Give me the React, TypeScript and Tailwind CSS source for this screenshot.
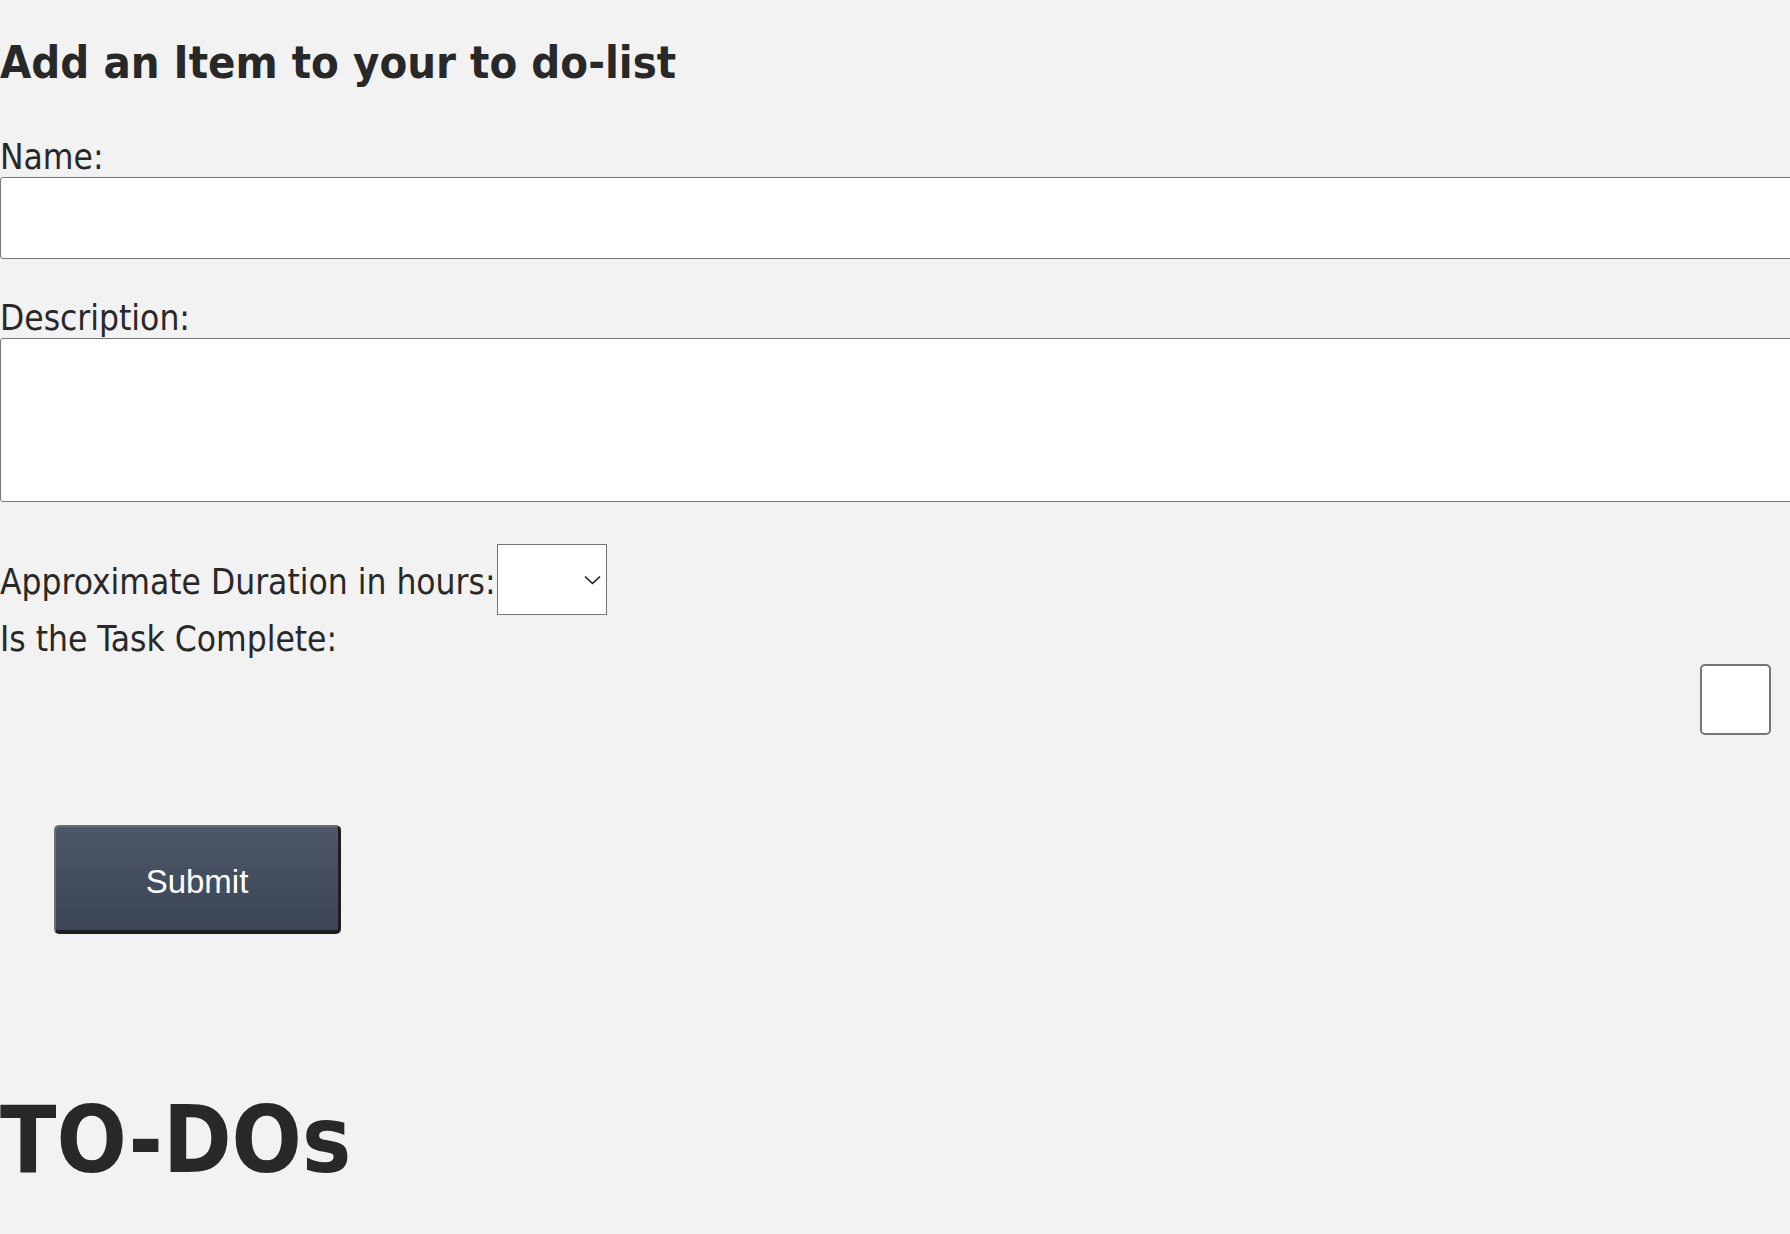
import { useState } from 'react';

// Simple to-do entry form
const bodyFont = { fontFamily: '"DejaVu Sans Condensed", "DejaVu Sans", Tahoma, Verdana, sans-serif' };

export default function App() {
  const [name, setName] = useState('');
  const [desc, setDesc] = useState('');
  const [hours, setHours] = useState('');
  const [done, setDone] = useState(false);

  return (
    <div className="min-h-screen w-full overflow-hidden bg-[#f2f2f2] text-[#282828]" style={bodyFont}>
      <form className="flex flex-col" onSubmit={(e) => e.preventDefault()}>
        <h2 className="mt-[38px] text-[45px] leading-[50px] font-bold font-stretch-condensed whitespace-nowrap">
          Add an Item to your to do-list
        </h2>

        <label className="mt-[49px] text-[35px] leading-[40px] font-stretch-condensed">Name:</label>
        <input
          value={name}
          onChange={(e) => setName(e.target.value)}
          className="h-[82px] w-[1820px] shrink-0 rounded-[3px] border border-[#767676] bg-white px-2 text-[30px] outline-none"
        />

        <label className="mt-[39px] text-[35px] leading-[40px] font-stretch-condensed">Description:</label>
        <textarea
          value={desc}
          onChange={(e) => setDesc(e.target.value)}
          className="h-[164px] w-[1820px] shrink-0 resize-none rounded-[3px] border border-[#767676] bg-white px-2 text-[30px] outline-none"
        />

        <div className="mt-[42px] flex items-end">
          <label className="mb-[13px] text-[35px] leading-[40px] font-stretch-condensed whitespace-nowrap">
            Approximate Duration in hours:
          </label>
          <div className="relative ml-[1px] h-[71px] w-[110px]">
            <select
              value={hours}
              onChange={(e) => setHours(e.target.value)}
              className="h-full w-full appearance-none border border-[#767676] bg-white outline-none"
            >
              <option value=""></option>
              <option value="1">1</option>
              <option value="2">2</option>
              <option value="3">3</option>
              <option value="4">4</option>
            </select>
            <svg
              className="pointer-events-none absolute left-[87px] top-[31px]"
              width="17"
              height="10"
              viewBox="0 0 17 10"
              fill="none"
            >
              <path d="M1 1.5 L8.5 8.5 L16 1.5" stroke="#1a1a1a" strokeWidth="1.6" />
            </svg>
          </div>
        </div>

        <label className="mt-[4px] text-[35px] leading-[40px] font-stretch-condensed">Is the Task Complete:</label>
        <div className="mt-[5px] flex justify-end pr-[19px]">
          <input
            type="checkbox"
            checked={done}
            onChange={(e) => setDone(e.target.checked)}
            className="h-[71px] w-[71px] appearance-none rounded-[5px] border-2 border-[#767676] bg-white"
          />
        </div>

        <div className="mt-[90px] pl-[54px]">
          <button
            type="submit"
            className="h-[109px] w-[287px] rounded-[5px] border-t-2 border-l-2 border-r-[3px] border-b-[4px] border-t-[#6e6e6e] border-l-[#6e6e6e] border-r-[#1e1e1e] border-b-[#1e1e1e] bg-gradient-to-b from-[#4d5768] to-[#3b4556] pt-[6px] text-[33px] text-white"
            style={{ fontFamily: '"Liberation Sans", Arial, sans-serif' }}
          >
            Submit
          </button>
        </div>

        <h1 className="mt-[157px] text-[92px] leading-[100px] font-bold font-stretch-condensed">TO-DOs</h1>
      </form>
    </div>
  );
}
